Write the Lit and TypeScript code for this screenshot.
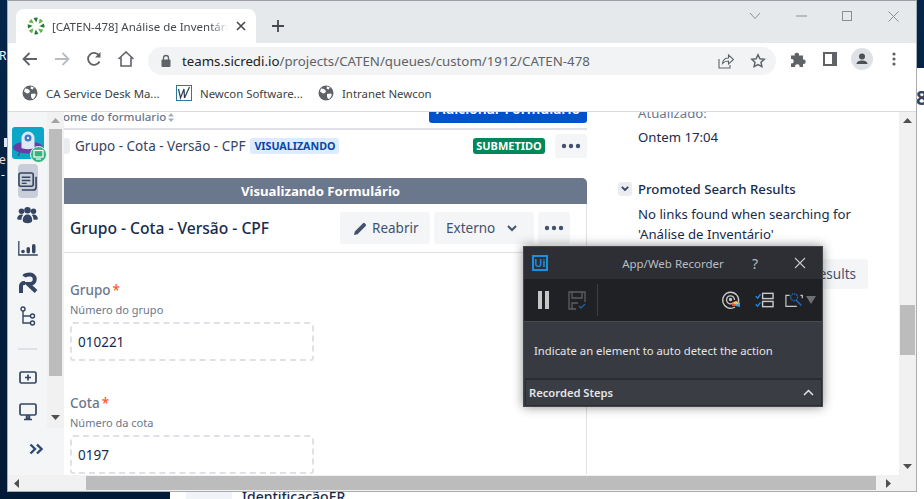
import { LitElement, html, css, svg } from "lit";
import { customElement } from "lit/decorators.js";

// chrome toolbar icons
const globe = html`<svg width="16" height="16" viewBox="0 0 16 16"><circle cx="8" cy="8" r="7.5" fill="#5f6368"/><path d="M3 3.500l3 .5 2 2-1 2-2 .5-3-2zM9 9l3.500-.5 1.500 1-2 4-2 .5-1-2.500zM9 1.500l3 1-1.500 2-2-1z" fill="#fff"/></svg>`;

const pinwheel = html`<svg width="18" height="18" viewBox="0 0 18 18">
  ${[0, 45, 90, 135, 180, 225, 270, 315].map(
    (a, i) => svg`<path d="M9.300 5.600 L6.600 1.300 Q8.500 .2 10.800 .8 Z" transform="rotate(${a} 9 9)" fill=${i % 2 ? "#63b545" : "#1d7c37"}/>`
  )}
</svg>`;

const people = html`<svg width="21" height="18" viewBox="0 0 24 21" fill="#344563">
  <circle cx="5" cy="6" r="3.200"/><circle cx="19" cy="6" r="3.200"/><circle cx="12" cy="5" r="3.800"/>
  <path d="M0 15c0-3 2-5 5-5 1 0 2 .4 2 .4C5.500 12 5 14 5 16H1.500C.5 16 0 16 0 15zM24 15c0-3-2-5-5-5-1 0-2 .4-2 .4 1.500 1.600 2 3.600 2 5.600h3.500c1 0 1.500 0 1.500-1zM6.500 17c0-4 2-7 5.500-7s5.500 3 5.500 7c0 2-2.500 3-5.500 3s-5.500-1-5.500-3z"/>
</svg>`;

@customElement("app-root")
export class AppRoot extends LitElement {
  static styles = css`
    :host {
      display: block;
      width: 924px;
      height: 499px;
      position: relative;
      overflow: hidden;
      background: linear-gradient(#04264a, #021a35);
      font-family: "Noto Sans", "Open Sans", sans-serif;
      color: #172b4d;
    }

    /* desktop bits behind the windows */
    .desk-label {
      position: absolute;
      left: -1px;
      color: #fff;
      font-size: 12px;
      line-height: 12px;
    }
    .desk-glyph {
      position: absolute;
      left: 4px;
      top: 138px;
      width: 4px;
      height: 9px;
      background: #dfe8f2;
    }
    .back-window {
      position: absolute;
      left: 170px;
      top: 68px;
      right: 0;
      bottom: 0;
      background: #fff;
    }
    .back-eight {
      position: absolute;
      left: 746px;
      top: 16px;
      font-size: 20px;
      font-weight: 700;
      color: #344563;
    }
    .back-chip {
      position: absolute;
      left: 16px;
      top: 420px;
      width: 46px;
      height: 20px;
      background: #f0f4f8;
      color: #0052cc;
      font-size: 9px;
      text-align: center;
      line-height: 27px;
    }
    .back-title {
      position: absolute;
      left: 72px;
      top: 419px;
      font-size: 14px;
      font-weight: 500;
      line-height: 20px;
    }

    /* browser window */
    .browser {
      position: absolute;
      left: 8px;
      top: 0;
      width: 908px;
      height: 491px;
      background: #fff;
      border-top: 1px solid #9aa0a6;
      box-sizing: border-box;
      display: flex;
      flex-direction: column;
      box-shadow: 0 0 0 1px #a9adb1;
    }
    .tabstrip {
      height: 42px;
      flex: none;
      background: #e6e9ec;
      display: flex;
    }
    .tab {
      margin: 8px 0 0 8px;
      width: 240px;
      height: 34px;
      box-sizing: border-box;
      background: #fff;
      border-radius: 8px 8px 0 0;
      display: flex;
      align-items: center;
      padding: 0 7px 0 11px;
      font-size: 11.500px;
      color: #45494f;
    }
    .tab-title {
      margin-left: 7px;
      width: 176px;
      white-space: nowrap;
      overflow: hidden;
      -webkit-mask-image: linear-gradient(to right, #000 90%, transparent);
      mask-image: linear-gradient(to right, #000 90%, transparent);
    }
    .tab-close {
      margin-left: 8px;
      display: flex;
    }
    .newtab {
      margin: 8px 0 0 8px;
      width: 28px;
      height: 34px;
      display: flex;
      align-items: center;
      justify-content: center;
    }
    .win-controls {
      margin-left: auto;
      display: flex;
      height: 30px;
    }
    .win-controls div {
      width: 46px;
      display: flex;
      align-items: center;
      justify-content: center;
    }
    .toolbar {
      height: 32px;
      flex: none;
      display: flex;
      padding-left: 6px;
    }
    .tb {
      width: 32px;
      height: 32px;
      flex: none;
      display: flex;
      align-items: center;
      justify-content: center;
    }
    .omnibox {
      width: 628px;
      flex: none;
      height: 28px;
      margin: 4px 6px 0 6px;
      border-radius: 14px;
      background: #f1f3f4;
      display: flex;
      align-items: center;
      padding: 0 2px 0 12px;
      box-sizing: border-box;
      font-size: 13.270px;
      color: #5f6368;
    }
    .url {
      margin-left: 10px;
      white-space: nowrap;
    }
    .url b {
      font-weight: 400;
      color: #202124;
    }
    .omni-icons {
      margin-left: auto;
      display: flex;
    }
    .bookmarks {
      height: 36px;
      flex: none;
      display: grid;
      grid-template-columns: 154px 142px auto;
      justify-content: start;
      align-items: center;
      padding-left: 14px;
      font-size: 11.400px;
      color: #3c4043;
      border-bottom: 1px solid #dadce0;
    }
    .bm {
      display: flex;
      align-items: center;
      gap: 8px;
      white-space: nowrap;
    }

    /* page */
    .page {
      flex: 1;
      min-height: 0;
      display: flex;
      overflow: hidden;
    }
    .sidebar {
      width: 56px;
      flex: none;
      background: #f4f5f7;
      display: flex;
      flex-direction: column;
    }
    .side-top {
      height: 316px;
      flex: none;
      display: flex;
    }
    .side-icons {
      width: 39px;
      flex: none;
      display: flex;
      flex-direction: column;
      align-items: center;
      padding-top: 15px;
      box-sizing: border-box;
    }
    .app-icon {
      position: relative;
      width: 32px;
      height: 32px;
      margin-left: 1px;
      flex: none;
    }
    .badge {
      position: absolute;
      left: 18px;
      top: 19px;
      display: flex;
    }
    .active-item {
      margin-top: 5px;
      width: 20px;
      height: 34px;
      background: #c9ced8;
      border-radius: 4px;
      display: flex;
      justify-content: center;
      align-items: center;
      flex: none;
    }
    .side-item {
      width: 39px;
      display: flex;
      justify-content: center;
      align-items: center;
      flex: none;
    }
    .side-divider {
      width: 19px;
      height: 2px;
      background: #dfe1e6;
      flex: none;
    }
    .side-bar {
      width: 17px;
      flex: none;
      background: #f1f1f1;
      display: flex;
      flex-direction: column;
      align-items: center;
    }
    .sb-arrow {
      height: 17px;
      flex: none;
      display: flex;
      align-items: center;
      justify-content: center;
    }
    .side-thumb {
      width: 13px;
      height: 247px;
      background: #bcbcbc;
      flex: none;
    }
    .side-expand {
      flex: 1;
      display: flex;
      align-items: flex-start;
      justify-content: center;
      padding: 15px 0 0 0;
    }

    .main {
      width: 523px;
      flex: none;
      overflow: hidden;
    }
    .main-inner {
      margin-left: -10px;
      width: 533px;
    }
    .list-head {
      height: 16px;
      display: flex;
      justify-content: space-between;
      align-items: flex-start;
      border-bottom: 2px solid #dfe1e6;
      font-size: 11.500px;
      font-weight: 500;
      color: #6b778c;
    }
    .col-name {
      line-height: 10px;
      white-space: nowrap;
      display: flex;
      align-items: center;
      gap: 2px;
    }
    .add-btn {
      margin-top: -19px;
      height: 30px;
      width: 158px;
      flex: none;
      background: #0052cc;
      color: #fff;
      border-radius: 0 0 3px 3px;
      font-size: 14px;
      font-weight: 600;
      display: flex;
      align-items: flex-end;
      justify-content: center;
      line-height: 18px;
      padding-bottom: 5px;
      box-sizing: border-box;
    }
    .list-row {
      height: 32px;
      display: flex;
      align-items: center;
      margin-bottom: 16px;
      font-size: 13.500px;
      color: #344563;
    }
    .row-handle {
      width: 16px;
      height: 16px;
      margin-right: 5px;
      background: #ebecf0;
      border-radius: 3px;
      flex: none;
    }
    .row-name {
      white-space: nowrap;
    }
    .lozenge {
      font-weight: 700;
      border-radius: 3px;
      line-height: 16px;
      height: 16px;
      padding: 0 4px;
      white-space: nowrap;
    }
    .lozenge.viewing {
      margin-left: 5px;
      background: #deebff;
      color: #0747a6;
      font-size: 10.700px;
    }
    .lozenge.done {
      margin-left: auto;
      background: #00875a;
      color: #fff;
      font-size: 11px;
      padding: 0 3px;
      width: 66px;
      text-align: center;
      margin-right: 10px;
    }
    .more {
      width: 32px;
      height: 24px;
      background: #f4f5f7;
      border-radius: 3px;
      display: flex;
      align-items: center;
      justify-content: center;
      flex: none;
    }
    .band {
      height: 26px;
      background: #6b778c;
      border-radius: 0 5px 0 0;
      color: #fff;
      text-align: center;
      font-size: 13.200px;
      font-weight: 700;
      line-height: 26px;
    }
    .form {
      border-right: 1px solid #dfe1e6;
    }
    .form-head {
      height: 48px;
      display: flex;
      align-items: center;
      gap: 4px;
      padding: 0 16px;
      border-bottom: 1px solid #dfe1e6;
    }
    .form-title {
      margin-right: auto;
      font-size: 15.600px;
      font-weight: 500;
      white-space: nowrap;
    }
    .btn {
      height: 32px;
      background: #f4f5f7;
      border-radius: 3px;
      display: flex;
      align-items: center;
      font-size: 13.500px;
      color: #42526e;
      box-sizing: border-box;
      flex: none;
    }
    .btn.reopen {
      width: 90px;
      gap: 5px;
      padding-left: 14px;
    }
    .btn.external {
      width: 100px;
      gap: 12px;
      padding-left: 12px;
    }
    .btn.dots {
      width: 32px;
      justify-content: center;
    }
    .fields {
      padding: 27px 16px 0;
      display: flex;
      flex-direction: column;
      gap: 32px;
    }
    .label {
      font-size: 13.500px;
      font-weight: 500;
      color: #6b778c;
      line-height: 20px;
    }
    .label span {
      margin-left: 2px;
      color: #ff5630;
    }
    .helper {
      margin-top: 2px;
      font-size: 11px;
      line-height: 16px;
      color: #6b778c;
    }
    .input {
      margin-top: 4px;
      width: 244px;
      height: 39px;
      box-sizing: border-box;
      border: 2px dashed #dfe1e6;
      border-radius: 3px;
      padding-left: 6px;
      font-size: 13.500px;
      line-height: 37px;
      color: #172b4d;
    }

    .aside {
      flex: 1;
      min-width: 0;
      overflow: hidden;
      font-size: 13.200px;
      padding-left: 31px;
      box-sizing: border-box;
    }
    .aside-updated {
      margin: -9px 0 0 20px;
      line-height: 20px;
      color: #6b778c;
    }
    .aside-date {
      margin: 4px 0 0 20px;
      line-height: 20px;
    }
    .aside-head {
      margin-top: 32px;
      display: flex;
      align-items: center;
      gap: 6px;
      line-height: 20px;
      font-weight: 500;
    }
    .chev-btn {
      width: 14px;
      height: 14px;
      background: #ebecf0;
      border-radius: 3px;
      display: flex;
      align-items: center;
      justify-content: center;
      flex: none;
    }
    .aside-text {
      margin: 5px 0 0 20px;
      line-height: 20px;
    }
    .aside-btn-row {
      margin-top: 15px;
      display: flex;
      justify-content: flex-end;
      padding-right: 31px;
    }
    .aside-btn {
      height: 30px;
      padding: 0 12px;
      background: #f4f5f7;
      border-radius: 3px;
      font-size: 13.500px;
      line-height: 30px;
      color: #42526e;
      white-space: nowrap;
    }
    .vbar {
      width: 17px;
      flex: none;
      background: #f1f1f1;
      display: flex;
      flex-direction: column;
    }
    .vthumb {
      margin: 176px 1px 0;
      height: 50px;
      background: #bcbcbc;
      flex: none;
    }
    .vbar-end {
      margin-top: auto;
    }
    .hbar {
      height: 16px;
      flex: none;
      background: #f1f1f1;
      display: flex;
      align-items: center;
    }
    .hbar-left {
      width: 16px;
      display: flex;
      justify-content: center;
      flex: none;
    }
    .hthumb {
      margin-left: 62px;
      width: 790px;
      height: 14px;
      background: #bcbcbc;
      flex: none;
    }
    .hbar-right {
      margin-left: 4px;
      width: 17px;
      display: flex;
      justify-content: center;
      flex: none;
    }

    /* recorder window, floats over the browser */
    .recorder {
      position: absolute;
      left: 523px;
      top: 246px;
      width: 300px;
      height: 161px;
      box-sizing: border-box;
      background: #373a40;
      border: 1px solid #45474b;
      box-shadow: 0 0 10px rgba(0, 0, 0, 0.45);
      display: flex;
      flex-direction: column;
      font-size: 11.500px;
      color: #e4e5e7;
    }
    .rec-title {
      height: 32px;
      flex: none;
      background: #2d2f34;
      display: flex;
      align-items: center;
      padding-left: 8px;
    }
    .ui-logo {
      width: 16px;
      height: 16px;
      box-sizing: border-box;
      border: 2px solid #1a8fe6;
      color: #1a8fe6;
      font-size: 11px;
      font-weight: 600;
      line-height: 12px;
      text-align: center;
      flex: none;
    }
    .rec-name {
      margin-left: 74px;
      width: 102px;
      text-align: center;
      color: #b9bdc3;
      white-space: nowrap;
    }
    .rec-help {
      margin-left: 21px;
      width: 20px;
      text-align: center;
      font-size: 14px;
      color: #b9bdc3;
    }
    .rec-close {
      margin-left: 29px;
      display: flex;
    }
    .rec-tools {
      height: 43px;
      flex: none;
      background: #202124;
      border-bottom: 1px solid #4a4c50;
      box-sizing: border-box;
      display: flex;
      align-items: center;
      padding-left: 14px;
    }
    .rec-save {
      margin-left: 19px;
      display: flex;
    }
    .rec-sep {
      width: 1px;
      height: 32px;
      margin-left: 10px;
      background: #3c3e42;
    }
    .rec-right {
      margin-left: auto;
      display: flex;
      align-items: center;
      padding-right: 6px;
    }
    .rec-target {
      margin-right: 14px;
      display: flex;
    }
    .rec-list {
      margin-right: 11px;
      display: flex;
    }
    .rec-wand {
      display: flex;
      align-items: center;
      gap: 1px;
    }
    .rec-body {
      flex: 1;
      display: flex;
      align-items: center;
      padding-left: 10px;
      font-size: 11.300px;
      white-space: nowrap;
    }
    .rec-steps {
      height: 28px;
      flex: none;
      box-sizing: border-box;
      margin: 0 0 0 1px;
      background: #3a3d44;
      border: 1px solid #2b2d31;
      border-top: 2px solid #2b2d31;
      display: flex;
      align-items: center;
      justify-content: space-between;
      padding: 0 7px 0 3px;
      font-weight: 600;
      font-size: 11.200px;
    }
  `;

  private dots(color: string) {
    return html`<svg width="20" height="6" viewBox="0 0 20 6" fill=${color}><circle cx="3" cy="3" r="2.200"/><circle cx="10" cy="3" r="2.200"/><circle cx="17" cy="3" r="2.200"/></svg>`;
  }

  private field(label: string, helper: string, value: string) {
    return html`<div>
      <div class="label">${label}<span>*</span></div>
      <div class="helper">${helper}</div>
      <div class="input">${value}</div>
    </div>`;
  }

  private renderTabstrip() {
    return html`<div class="tabstrip">
      <div class="tab">
        ${pinwheel}
        <div class="tab-title">[CATEN-478] Análise de Inventário</div>
        <div class="tab-close">
          <svg width="10" height="10" viewBox="0 0 10 10"><path d="M1 1l8 8M9 1l-8 8" stroke="#45494f" stroke-width="1.600"/></svg>
        </div>
      </div>
      <div class="newtab">
        <svg width="14" height="14" viewBox="0 0 14 14"><path d="M7 1v12M1 7h12" stroke="#45494f" stroke-width="1.800"/></svg>
      </div>
      <div class="win-controls">
        <div><svg width="12" height="8" viewBox="0 0 12 8" fill="none"><path d="M1 1l5 5.500L11 1" stroke="#8b8e92"/></svg></div>
        <div><svg width="11" height="2" viewBox="0 0 11 2"><path d="M0 1h11" stroke="#8b8e92"/></svg></div>
        <div><svg width="10" height="10" viewBox="0 0 10 10" fill="none"><rect x=".5" y=".5" width="9" height="9" stroke="#8b8e92"/></svg></div>
        <div><svg width="11" height="11" viewBox="0 0 11 11"><path d="M.5.5l10 10M10.500.5l-10 10" stroke="#8b8e92"/></svg></div>
      </div>
    </div>`;
  }

  private renderToolbar() {
    return html`<div class="toolbar">
      <div class="tb"><svg width="16" height="14" viewBox="0 0 16 14" fill="none"><path d="M15 7H2M7.500 1L1.500 7l6 6" stroke="#5f6368" stroke-width="1.800"/></svg></div>
      <div class="tb"><svg width="16" height="14" viewBox="0 0 16 14" fill="none"><path d="M1 7h13M8.500 1l6 6-6 6" stroke="#b9bcc0" stroke-width="1.800"/></svg></div>
      <div class="tb"><svg width="16" height="16" viewBox="0 0 16 16" fill="none"><path d="M13.500 10.500A6 6 0 1 1 13 4.500" stroke="#5f6368" stroke-width="1.800"/><path d="M14.500 1v5.500H9z" fill="#5f6368"/></svg></div>
      <div class="tb"><svg width="18" height="16" viewBox="0 0 18 16" fill="none"><path d="M1.500 8L9 1l7.500 7M4 6.500V15h10V6.500" stroke="#5f6368" stroke-width="1.600"/></svg></div>
      <div class="omnibox">
        <svg width="12" height="14" viewBox="0 0 12 14" fill="#5f6368"><rect x="1.500" y="5.500" width="9" height="7.500" rx="1"/><path d="M3.500 6V4a2.500 2.500 0 0 1 5 0v2" fill="none" stroke="#5f6368" stroke-width="1.300"/></svg>
        <div class="url"><b>teams.sicredi.io</b>/projects/CATEN/queues/custom/1912/CATEN-478</div>
        <div class="omni-icons">
          <div class="tb"><svg width="16" height="16" viewBox="0 0 16 16" fill="none" stroke="#5f6368" stroke-width="1.100"><path d="M1 6v9h11v-3"/><path d="M4.500 10.500C5 7 7.500 5 10.500 5V2l5 4.500-5 4.500V8C8 8 6 8.800 4.500 10.500z"/></svg></div>
          <div class="tb"><svg width="16" height="16" viewBox="0 0 16 16" fill="none"><path d="M8 1.800l1.900 4 4.300.5-3.200 3 .9 4.300L8 11.500l-3.900 2.100.9-4.300-3.200-3 4.300-.5z" stroke="#5f6368" stroke-width="1.500"/></svg></div>
        </div>
      </div>
      <div class="tb"><svg width="16" height="16" viewBox="0 0 16 16" fill="#5f6368"><path d="M1 4.500h3.700a2.200 2.200 0 1 1 4.300 0H13v4a2.200 2.200 0 1 1 0 4.300V16H9.500a2.200 2.200 0 1 0-4.300 0H1v-3.700a2.200 2.200 0 1 0 0-4.300z"/></svg></div>
      <div class="tb"><svg width="14" height="14" viewBox="0 0 14 14"><rect width="14" height="14" fill="#5f6368"/><rect x="2" y="2" width="7" height="10" fill="#fff"/></svg></div>
      <div class="tb"><svg width="22" height="22" viewBox="0 0 22 22"><circle cx="11" cy="11" r="11" fill="#dee1e6"/><circle cx="11" cy="8.500" r="3" fill="#4d5156"/><path d="M5.500 16c0-2.500 3-3.500 5.500-3.500s5.500 1 5.500 3.500z" fill="#4d5156"/></svg></div>
      <div class="tb"><svg width="4" height="14" viewBox="0 0 4 14" fill="#5f6368"><circle cx="2" cy="2" r="1.600"/><circle cx="2" cy="7" r="1.600"/><circle cx="2" cy="12" r="1.600"/></svg></div>
    </div>`;
  }

  private renderBookmarks() {
    return html`<div class="bookmarks">
      <div class="bm">${globe}CA Service Desk Ma...</div>
      <div class="bm">
        <svg width="16" height="16" viewBox="0 0 16 16" fill="none"><rect x=".5" y=".5" width="15" height="15" stroke="#2b7a9e"/><path d="M2.500 4L4.500 13 8 4 8.500 13 13.500 2" stroke="#2a3f55" stroke-width="1.200"/></svg>
        Newcon Software...
      </div>
      <div class="bm">${globe}Intranet Newcon</div>
    </div>`;
  }

  private renderSidebar() {
    return html`<div class="sidebar">
      <div class="side-top">
        <div class="side-icons">
          <div class="app-icon">
            <svg width="32" height="32" viewBox="0 0 32 32">
              <rect width="32" height="32" rx="3" fill="#0ca6c6"/>
              <ellipse cx="16" cy="20.500" rx="15" ry="6" fill="#6a3da5"/>
              <path d="M8 25l-2 4M24 25l2 4" stroke="#6a3da5" stroke-width="1.500"/>
              <path d="M9.500 21V11a6.500 6.500 0 0 1 13 0v10c-3 1.500-10 1.500-13 0z" fill="#dfe9f5"/>
              <circle cx="16" cy="11" r="3.500" fill="#3f78c9"/>
              <circle cx="16" cy="11" r="1.200" fill="#dfe9f5"/>
            </svg>
            <div class="badge">
              <svg width="17" height="17" viewBox="0 0 17 17"><circle cx="8.500" cy="8.500" r="8" fill="#36b37e" stroke="#f4f5f7"/><rect x="4" y="4.500" width="9" height="6.500" fill="none" stroke="#fff" stroke-width="1.200"/><path d="M6 13h5" stroke="#fff" stroke-width="1.200"/></svg>
            </div>
          </div>
          <div class="active-item">
            <svg width="19" height="19" viewBox="0 0 20 20" fill="none" stroke="#344563" stroke-width="1.700"><rect x="1" y="1" width="15" height="14" rx="2"/><path d="M4 5.500h9M4 9h9M4 12h5" stroke-width="1.500"/><path d="M19 5v11a3 3 0 0 1-3 3H4"/></svg>
          </div>
          <div class="side-item" style="height:34px">${people}</div>
          <div class="side-item" style="height:33px">
            <svg width="20" height="15" viewBox="0 0 20 15" fill="#344563"><path d="M.8 0v14h19" fill="none" stroke="#344563" stroke-width="1.300"/><circle cx="5" cy="10.500" r="1.800"/><rect x="8.500" y="6" width="3.500" height="6.500" rx="1.700"/><rect x="14" y="3" width="3.500" height="9.500" rx="1.700"/></svg>
          </div>
          <div class="side-item" style="height:35px">
            <svg width="20" height="21" viewBox="0 0 20 21" fill="none" stroke="#344563" stroke-width="4"><path d="M3 21v-7a3 3 0 0 1 3-3h1"/><path d="M6 4.500C7 3 9 2.500 12 2.500a4.700 4.700 0 0 1 0 9.500h-2l8 7.500"/></svg>
          </div>
          <div class="side-item" style="height:32px">
            <svg width="16" height="20" viewBox="0 0 16 20" fill="none" stroke="#344563" stroke-width="1.400"><circle cx="3" cy="3" r="2"/><path d="M3 5v12h7M3 10h7"/><circle cx="12.500" cy="10" r="2"/><circle cx="12.500" cy="17" r="2"/></svg>
          </div>
          <div class="side-divider" style="margin-top:16px"></div>
          <div class="side-item" style="height:54px">
            <svg width="18" height="13" viewBox="0 0 18 13" fill="none"><rect x="1" y="1" width="16" height="11" rx="1.500" stroke="#344563" stroke-width="1.700"/><path d="M9 3.500v6M6 6.500h6" stroke="#344563" stroke-width="1.700"/></svg>
          </div>
          <div class="side-item" style="height:16px">
            <svg width="18" height="18" viewBox="0 0 18 18" fill="none"><rect x="1" y="1" width="16" height="11" rx="1.500" stroke="#344563" stroke-width="1.700"/><path d="M7.500 13h3v2h-3zM5 16.500h8" stroke="#344563" stroke-width="1.500"/></svg>
          </div>
        </div>
        <div class="side-bar">
          <div class="sb-arrow"><svg width="9" height="5" viewBox="0 0 9 5"><path d="M0 5L4.500 0 9 5z" fill="#a3a3a3"/></svg></div>
          <div class="side-thumb"></div>
          <div class="sb-arrow" style="margin-top:auto;margin-bottom:2px"><svg width="9" height="5" viewBox="0 0 9 5"><path d="M0 0l4.500 5L9 0z" fill="#505050"/></svg></div>
        </div>
      </div>
      <div class="side-expand">
        <svg width="14" height="12" viewBox="0 0 14 12" fill="none" stroke="#2f4a75" stroke-width="2.400" style="margin-left:-1px"><path d="M1.500 1.500L6 6l-4.500 4.500M8 1.500L12.500 6 8 10.500"/></svg>
      </div>
    </div>`;
  }

  private renderMain() {
    return html`<div class="main">
      <div class="main-inner">
        <div class="list-head">
          <div class="col-name">
            Nome do formulario
            <svg width="6" height="9" viewBox="0 0 6 9" fill="#a5adba"><path d="M0 3.500L3 0l3 3.500zM0 5.500h6L3 9z"/></svg>
          </div>
          <div class="add-btn">Adicionar Formulário</div>
        </div>
        <div class="list-row">
          <div class="row-handle"></div>
          <div class="row-name">Grupo - Cota - Versão - CPF</div>
          <div class="lozenge viewing">VISUALIZANDO</div>
          <div class="lozenge done">SUBMETIDO</div>
          <div class="more">${this.dots("#42526e")}</div>
        </div>
        <div class="band">Visualizando Formulário</div>
        <div class="form">
          <div class="form-head">
            <div class="form-title">Grupo - Cota - Versão - CPF</div>
            <div class="btn reopen">
              <svg width="13" height="13" viewBox="0 0 13 13" fill="#42526e"><path d="M0 13l.8-3.500L9 1.300a1.200 1.200 0 0 1 1.700 0l1 1a1.200 1.200 0 0 1 0 1.700L3.500 12.200z"/></svg>
              Reabrir
            </div>
            <div class="btn external">
              Externo
              <svg width="10" height="7" viewBox="0 0 10 7" fill="none"><path d="M1 1l4 4 4-4" stroke="#42526e" stroke-width="2"/></svg>
            </div>
            <div class="btn dots">${this.dots("#42526e")}</div>
          </div>
          <div class="fields">
            ${this.field("Grupo", "Número do grupo", "010221")}
            ${this.field("Cota", "Número da cota", "0197")}
          </div>
        </div>
      </div>
    </div>`;
  }

  private renderAside() {
    return html`<div class="aside">
      <div class="aside-updated">Atualizado:</div>
      <div class="aside-date">Ontem 17:04</div>
      <div class="aside-head">
        <div class="chev-btn">
          <svg width="8" height="6" viewBox="0 0 8 6" fill="none"><path d="M.8.8L4 4l3.200-3.200" stroke="#344563" stroke-width="1.800"/></svg>
        </div>
        Promoted Search Results
      </div>
      <div class="aside-text">No links found when searching for<br />'Análise de Inventário'</div>
      <div class="aside-btn-row"><div class="aside-btn">Search Results</div></div>
    </div>`;
  }

  private renderRecorder() {
    return html`<div class="recorder">
      <div class="rec-title">
        <div class="ui-logo">Ui</div>
        <div class="rec-name">App/Web Recorder</div>
        <div class="rec-help">?</div>
        <div class="rec-close">
          <svg width="12" height="12" viewBox="0 0 12 12"><path d="M1 1l10 10M11 1L1 11" stroke="#c4c7cc" stroke-width="1.100"/></svg>
        </div>
      </div>
      <div class="rec-tools">
        <svg width="11" height="18" viewBox="0 0 11 18" fill="#c6c6c6"><rect width="4" height="18"/><rect x="7" width="4" height="18"/></svg>
        <div class="rec-save">
          <svg width="19" height="19" viewBox="0 0 19 19" fill="none" stroke="#5c5e61" stroke-width="1.300"><path d="M8 18H1V1h16v10"/><path d="M4 1v6h10V1M4 18v-6h6"/><path d="M11 15l2 2 4-4" stroke="#1f5fa8"/></svg>
        </div>
        <div class="rec-sep"></div>
        <div class="rec-right">
          <div class="rec-target">
            <svg width="20" height="20" viewBox="0 0 20 20" fill="none" stroke="#c8c8c8" stroke-width="1.300"><path d="M14 17a8 8 0 1 1 3.500-5"/><path d="M12 13a4 4 0 1 1 1.500-3"/><circle cx="9.500" cy="9.500" r="1" fill="#c8c8c8"/><path d="M11 13l4-2v5h-4z" fill="#e0582a" stroke="none"/><path d="M15 11l4 2v4l-4-1z" fill="#3ba4e8" stroke="none"/><path d="M11 13l4-2 4 2-4 1.500z" fill="#f2c14e" stroke="none"/></svg>
          </div>
          <div class="rec-list">
            <svg width="19" height="16" viewBox="0 0 20 16" fill="none" stroke="#c8c8c8" stroke-width="1.500"><rect x="8" y="1" width="11" height="5.500"/><rect x="8" y="9.500" width="11" height="5.500"/><path d="M.8 4l2 2 3-4M.8 12.500l2 2 3-4" stroke="#2a82da"/></svg>
          </div>
          <div class="rec-wand">
            <svg width="20" height="16" viewBox="0 0 22 16" fill="none"><path d="M5 3H1v12h12M17 3h2v3" stroke="#c8c8c8" stroke-width="1.300"/><circle cx="10" cy="5" r="3.800" stroke="#1f6fc9" stroke-width="1.500" stroke-dasharray="1.500 1"/><path d="M12 8l6 6" stroke="#1f6fc9" stroke-width="1.600"/></svg>
            <svg width="10" height="8" viewBox="0 0 10 8"><path d="M0 0h10L5 8z" fill="#6d6f72"/></svg>
          </div>
        </div>
      </div>
      <div class="rec-body">Indicate an element to auto detect the action</div>
      <div class="rec-steps">
        Recorded Steps
        <svg width="11" height="7" viewBox="0 0 11 7" fill="none"><path d="M1 6l4.500-4.500L10 6" stroke="#e4e5e7" stroke-width="1.500"/></svg>
      </div>
    </div>`;
  }

  render() {
    return html`
      <div class="desk-label" style="top:50px">Re</div>
      <div class="desk-glyph"></div>
      <div class="desk-label" style="top:154px;color:#f3d9d0">e</div>
      <div class="desk-label" style="top:169px;left:1px">-</div>
      <div class="back-window">
        <div class="back-eight">8</div>
        <div class="back-chip">▼</div>
        <div class="back-title">IdentificaçãoER</div>
      </div>
      <div class="browser">
        ${this.renderTabstrip()} ${this.renderToolbar()} ${this.renderBookmarks()}
        <div class="page">
          ${this.renderSidebar()} ${this.renderMain()} ${this.renderAside()}
          <div class="vbar">
            <div class="sb-arrow"><svg width="9" height="5" viewBox="0 0 9 5"><path d="M0 5L4.500 0 9 5z" fill="#505050"/></svg></div>
            <div class="vthumb"></div>
            <div class="sb-arrow vbar-end"><svg width="9" height="5" viewBox="0 0 9 5"><path d="M0 0l4.500 5L9 0z" fill="#505050"/></svg></div>
          </div>
        </div>
        <div class="hbar">
          <div class="hbar-left"><svg width="5" height="9" viewBox="0 0 5 9"><path d="M5 0L0 4.500 5 9z" fill="#505050"/></svg></div>
          <div class="hthumb"></div>
          <div class="hbar-right"><svg width="5" height="9" viewBox="0 0 5 9"><path d="M0 0l5 4.500L0 9z" fill="#505050"/></svg></div>
        </div>
      </div>
      ${this.renderRecorder()}
    `;
  }
}
